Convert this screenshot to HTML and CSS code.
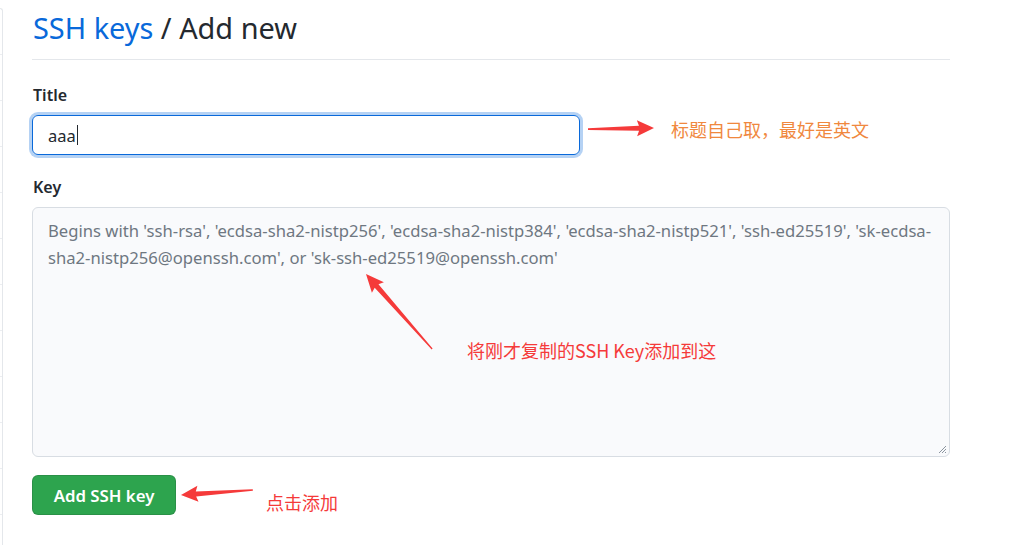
FILE: index.html
```html
<!DOCTYPE html>
<html lang="en">
<head>
<meta charset="utf-8">
<title>SSH keys / Add new</title>
<link rel="stylesheet" href="styles.css">
</head>
<body>
<div class="page">
  <div class="side">
    <div class="side-item"></div><div class="side-item"></div><div class="side-item"></div>
    <div class="side-item"></div><div class="side-item"></div><div class="side-item"></div>
    <div class="side-item"></div><div class="side-item"></div><div class="side-item"></div>
    <div class="side-item"></div><div class="side-item"></div><div class="side-item"></div>
  </div>
  <main class="main">
    <h2 class="heading"><a class="crumb" href="#">SSH keys</a> / Add new</h2>
    <form class="form">
      <label class="label" for="title">Title</label>
      <div class="input"><span class="input-text">aaa</span><span class="caret"></span></div>
      <label class="label key-label" for="key">Key</label>
      <div class="textarea">
        <p class="placeholder">Begins with 'ssh-rsa', 'ecdsa-sha2-nistp256', 'ecdsa-sha2-nistp384', 'ecdsa-sha2-nistp521', 'ssh-ed25519', 'sk-ecdsa-sha2-nistp256@openssh.com', or 'sk-ssh-ed25519@openssh.com'</p>
        <svg class="grip" width="9" height="9" viewBox="0 0 9 9"><path d="M8 1 L1 8 M8 4 L4 8 M8 7 L7 8" stroke="#8c959f" stroke-width="1"/></svg>
      </div>
      <button class="btn" type="button">Add SSH key</button>
    </form>
  </main>
</div>

<svg class="arrows" width="1035" height="545" viewBox="0 0 1035 545">
  <g fill="#f53a3a">
    <g transform="translate(654,128) rotate(179)">
      <polygon points="0,0 17,-8 15,-2.5 66,-0.8 66,0.8 15,2.5 17,8"/>
    </g>
    <g transform="translate(366,274) rotate(48.6)">
      <polygon points="0,0 18,-8 16,-2.5 100,-0.6 100,0.6 16,2.5 18,8"/>
    </g>
    <g transform="translate(181,495) rotate(-4)">
      <polygon points="0,0 17,-8 15,-2.5 72,-0.8 72,0.8 15,2.5 17,8"/>
    </g>
  </g>
</svg>
<div class="note note-title">标题自己取，最好是英文</div>
<div class="note note-key">将刚才复制的SSH Key添加到这</div>
<div class="note note-btn">点击添加</div>
</body>
</html>
```
FILE: styles.css
```css
html, body {
  margin: 0;
  padding: 0;
  background: #ffffff;
}
body {
  font-family: "Noto Sans", "Liberation Sans", sans-serif;
  color: #24292f;
  width: 1035px;
  height: 545px;
  overflow: hidden;
  position: relative;
}
.page {
  display: flex;
  align-items: flex-start;
}
.side {
  width: 2px;
  margin-top: 8px;
  border-top: 1px solid #e4e7eb;
  border-right: 1px solid #e4e7eb;
  border-top-right-radius: 6px;
  display: flex;
  flex-direction: column;
}
.side-item {
  height: 45px;
  border-bottom: 1px solid #eceef1;
}
.main {
  margin-left: 29px;
  width: 918px;
}
.heading {
  margin: 0;
  padding: 8px 0 11px 1px;
  font-size: 28.9px;
  font-weight: 400;
  line-height: 40px;
  color: #24292f;
  border-bottom: 1px solid #e4e7eb;
}
.crumb {
  color: #0969da;
  text-decoration: none;
}
.form {
  display: flex;
  flex-direction: column;
  align-items: flex-start;
  padding-top: 23px;
}
.label {
  font-size: 16px;
  font-weight: 600;
  line-height: 24px;
  margin-bottom: 8px;
  margin-left: 1px;
}
.key-label {
  margin-top: 20px;
  margin-bottom: 8px;
}
.input {
  box-sizing: border-box;
  width: 548px;
  height: 40px;
  border: 1px solid #0969da;
  border-radius: 6px;
  box-shadow: 0 0 0 3px rgba(9, 105, 218, 0.3);
  display: flex;
  align-items: center;
  padding-left: 15px;
  font-size: 16.5px;
  color: #24292f;
}
.caret {
  width: 1px;
  height: 20px;
  background: #24292f;
  margin-left: 1px;
}
.textarea {
  box-sizing: border-box;
  width: 918px;
  height: 250px;
  background: #f9fafc;
  border: 1px solid #d8dde3;
  border-radius: 6px;
  padding: 9px 12px 9px 15px;
  position: relative;
}
.placeholder {
  margin: 0;
  font-size: 16.65px;
  line-height: 27px;
  color: #6e7781;
}
.grip {
  position: absolute;
  right: 2px;
  bottom: 2px;
}
.btn {
  margin-top: 18px;
  width: 144px;
  height: 40px;
  border: 1px solid rgba(27, 31, 36, 0.15);
  border-radius: 6px;
  background: #2da44e;
  color: #ffffff;
  font-family: inherit;
  font-size: 16.8px;
  font-weight: 600;
  padding: 0;
}
.arrows {
  position: absolute;
  left: 0;
  top: 0;
  pointer-events: none;
}
.note {
  position: absolute;
  font-family: "Noto Sans CJK SC", sans-serif;
  font-size: 18px;
  line-height: 24px;
  white-space: nowrap;
}
.note-title {
  left: 671px;
  top: 117px;
  color: #f0883e;
}
.note-key {
  left: 467px;
  top: 338px;
  color: #f53a3a;
}
.note-btn {
  left: 266px;
  top: 490px;
  color: #f53a3a;
}
```
